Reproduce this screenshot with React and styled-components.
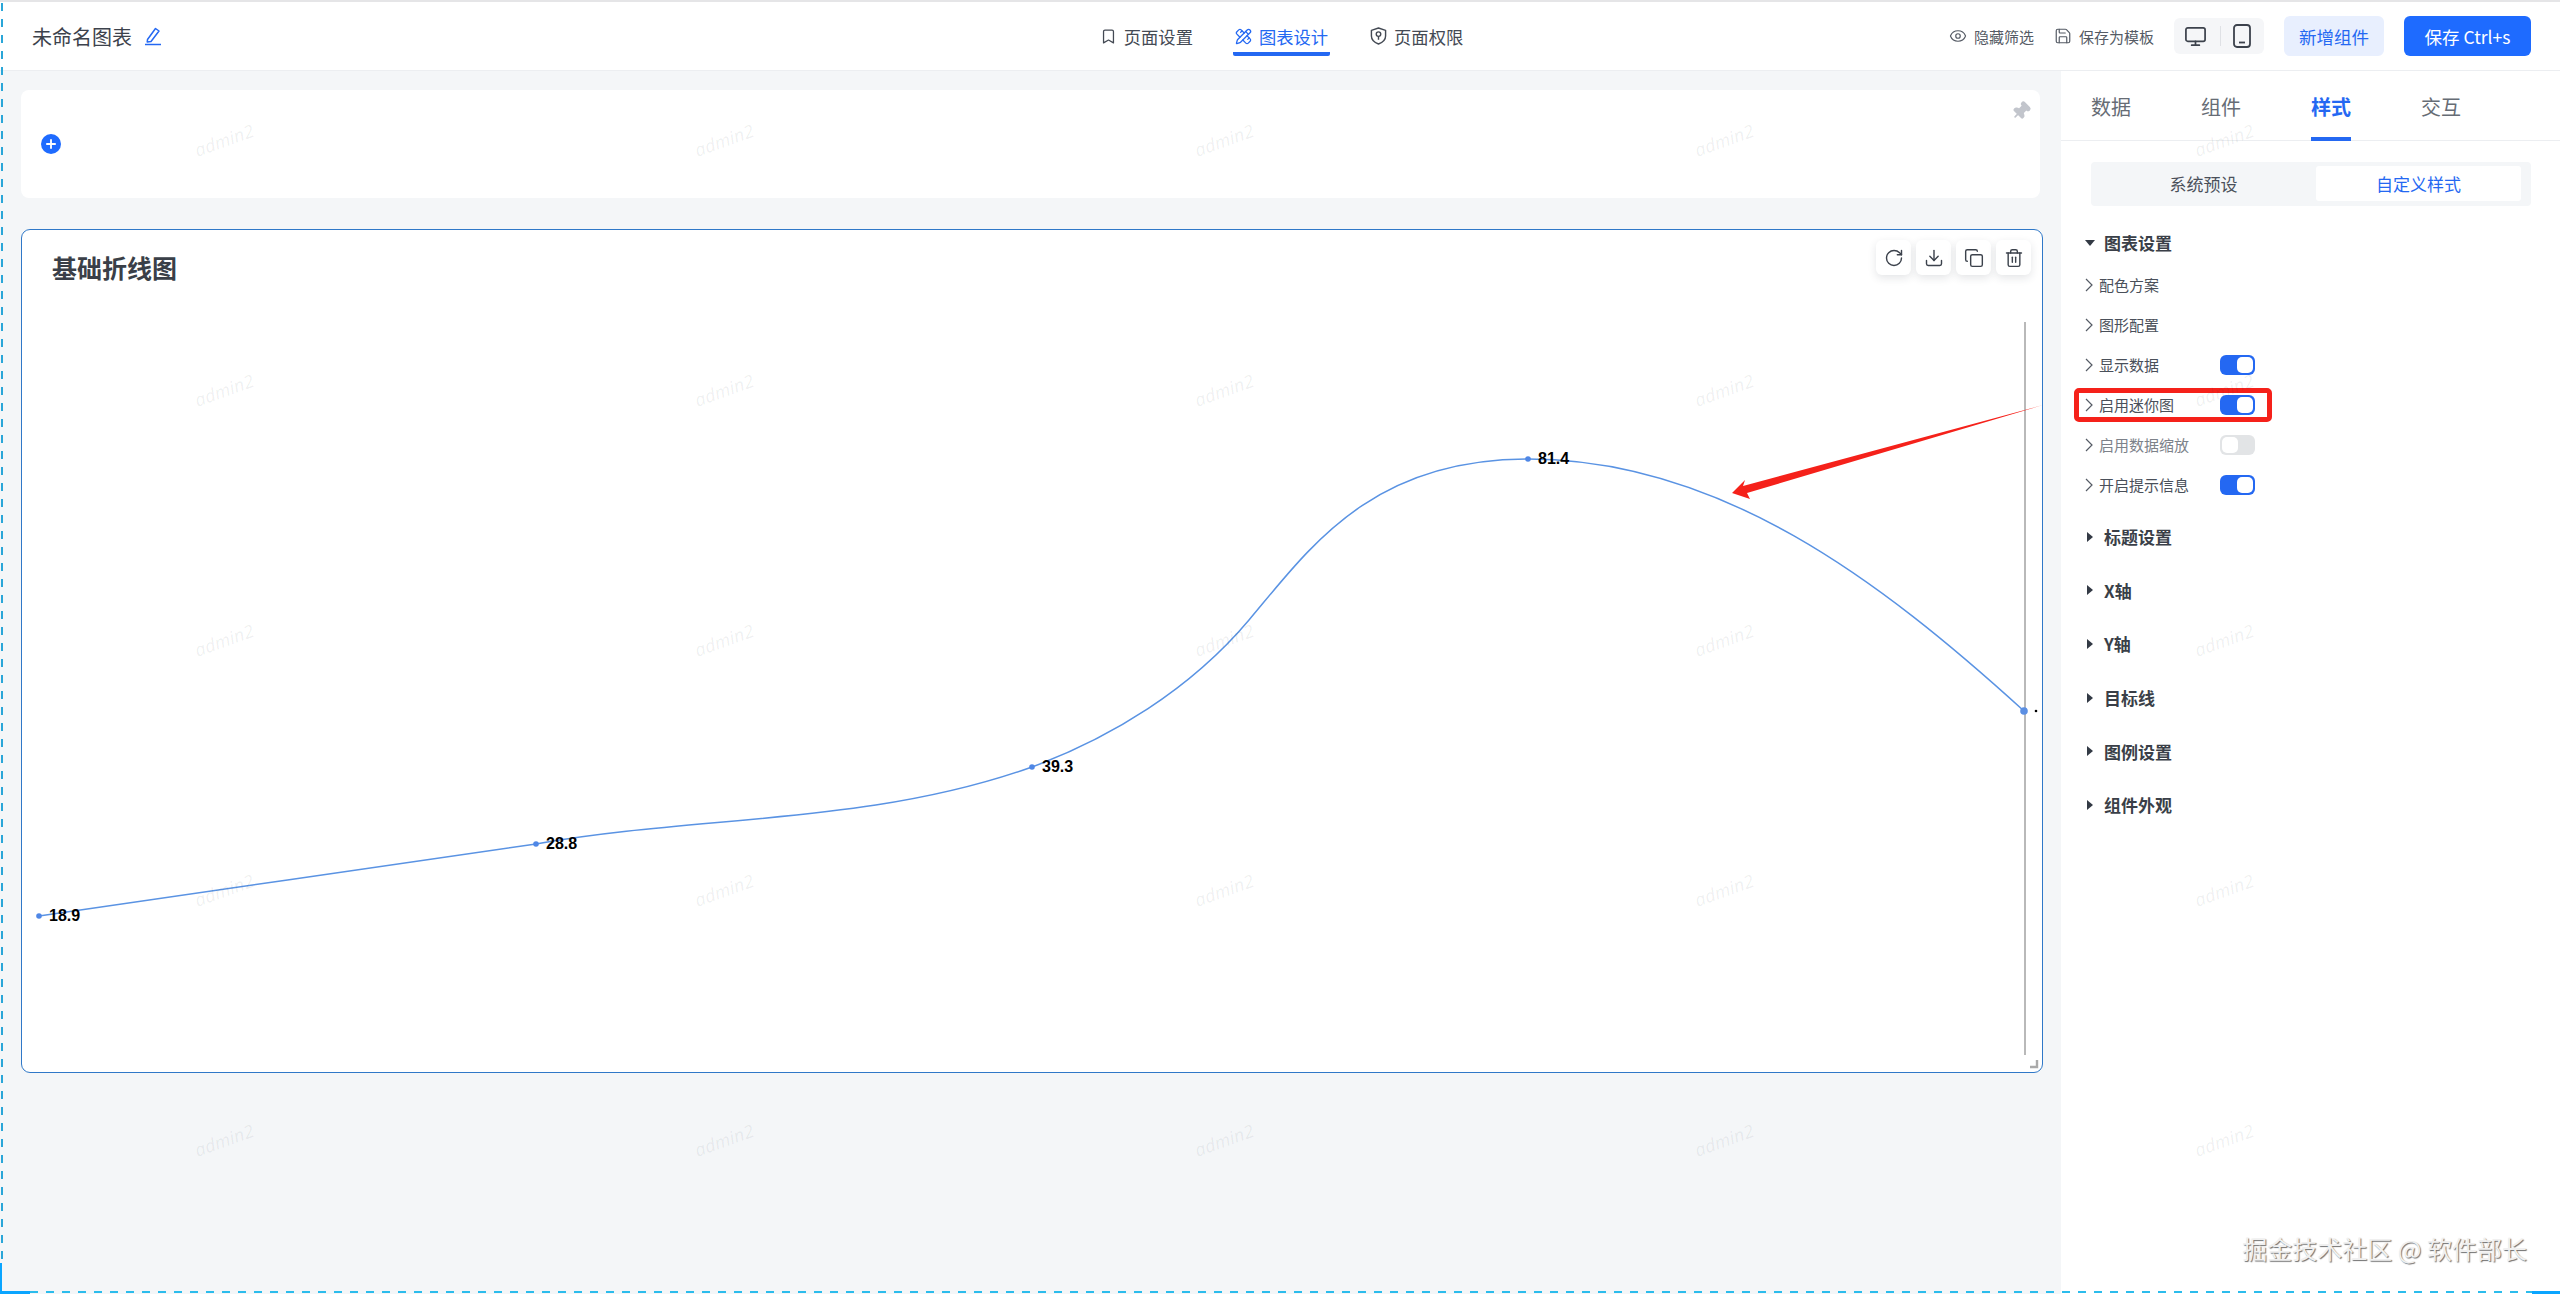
import React from "react";
import styled, { createGlobalStyle } from "styled-components";
import {
  Bookmark,
  PencilRuler,
  Eye,
  Save,
  Monitor,
  RotateCw,
  Download,
  Copy,
  Trash2,
  Plus,
  Pin,
} from "lucide-react";

const GlobalStyle = createGlobalStyle`
  html, body {
    margin: 0;
    padding: 0;
    background: #fff;
  }
  body {
    font-family: "Noto Sans CJK SC", "Noto Sans", sans-serif;
    color: #333a45;
  }
  *, *::before, *::after {
    box-sizing: border-box;
  }
`;

const Page = styled.div`
  position: relative;
  width: 2560px;
  height: 1294px;
  overflow: hidden;
  display: flex;
  flex-direction: column;
`;

const Header = styled.header`
  height: 71px;
  flex-shrink: 0;
  display: grid;
  grid-template-columns: 1fr auto 1fr;
  align-items: center;
  border-top: 2px solid #e5e5e7;
  border-bottom: 1px solid #eceef1;
  background: #fff;
`;

const TitleGroup = styled.div`
  display: flex;
  align-items: center;
  gap: 12px;
  padding-left: 32px;
  font-size: 20px;
  color: #3c424c;
`;

const NavTabs = styled.nav`
  display: flex;
  gap: 38px;
  margin-left: 3px;
`;

const NavTab = styled.div`
  display: flex;
  align-items: center;
  gap: 7px;
  height: 36px;
  margin-top: 4px;
  padding: 0 2px;
  font-size: 17.3px;
  color: ${(p) => (p.$active ? "#2468f2" : "#444a54")};
  border-bottom: 4px solid ${(p) => (p.$active ? "#2468f2" : "transparent")};
  border-radius: 2px;
`;

const Actions = styled.div`
  display: flex;
  align-items: center;
  justify-content: flex-end;
  gap: 20px;
  padding-right: 29px;
`;

const TextAction = styled.div`
  display: flex;
  align-items: center;
  gap: 7px;
  font-size: 15px;
  color: #555b65;
`;

const DeviceGroup = styled.div`
  display: flex;
  align-items: center;
  width: 90px;
  height: 36px;
  padding: 0 13px 0 10px;
  justify-content: space-between;
  background: #f5f6f8;
  border-radius: 6px;
  color: #3c424c;
`;

const DeviceDivider = styled.span`
  width: 1px;
  height: 20px;
  background: #dfe1e5;
`;

const Button = styled.button`
  height: 40px;
  width: ${(p) => p.$width}px;
  border: 0;
  border-radius: 6px;
  font-family: inherit;
  font-size: 17.5px;
  color: ${(p) => (p.$primary ? "#fff" : "#2468f2")};
  background: ${(p) => (p.$primary ? "#1e6bff" : "#e8effe")};
`;

const Body = styled.div`
  flex: 1;
  display: flex;
  min-height: 0;
`;

const Canvas = styled.main`
  width: 2061px;
  padding: 19px 18px 0 21px;
  background: #f4f6f8;
`;

const FilterCard = styled.section`
  position: relative;
  height: 108px;
  margin-right: 3px;
  margin-bottom: 31px;
  padding-left: 20px;
  display: flex;
  align-items: center;
  background: #fff;
  border-radius: 8px;
`;

const AddCircle = styled.div`
  width: 20px;
  height: 20px;
  border-radius: 50%;
  background: #1e6bff;
  color: #fff;
  display: flex;
  align-items: center;
  justify-content: center;
`;

const PinMark = styled.div`
  position: absolute;
  top: 11px;
  right: 9px;
  color: #c2c5cc;
  transform: rotate(45deg);
  display: flex;
`;

const ChartCard = styled.section`
  position: relative;
  height: 844px;
  display: flex;
  flex-direction: column;
  background: #fff;
  border: 1px solid #2f78c8;
  border-radius: 9px;
`;

const ChartTitle = styled.h2`
  margin: 0;
  height: 70px;
  flex-shrink: 0;
  padding: 19px 0 0 30px;
  font-size: 25px;
  line-height: 36px;
  font-weight: 700;
  color: #3a3f48;
`;

const ChartToolbar = styled.div`
  position: absolute;
  top: 10px;
  right: 11px;
  display: flex;
  gap: 5px;
`;

const ToolButton = styled.div`
  width: 35px;
  height: 35px;
  display: flex;
  align-items: center;
  justify-content: center;
  background: #fff;
  border-radius: 6px;
  box-shadow: 0 3px 8px rgba(30, 40, 60, 0.12);
  color: #3c424c;
`;

const ChartSvg = styled.svg`
  display: block;
  flex: 1;
  width: 100%;
  min-height: 0;
`;

const PointLabel = styled.text`
  font-family: "Liberation Sans", Arial, sans-serif;
  font-size: 16px;
  font-weight: 700;
  fill: #000;
`;

const Panel = styled.aside`
  width: 499px;
  background: #fff;
`;

const PanelTabs = styled.div`
  display: flex;
  gap: 70px;
  height: 70px;
  padding-left: 30px;
  border-bottom: 1px solid #eceef1;
`;

const PanelTab = styled.div`
  display: flex;
  align-items: center;
  height: 70px;
  padding-top: 4px;
  font-size: 20px;
  font-weight: ${(p) => (p.$active ? 700 : 400)};
  color: ${(p) => (p.$active ? "#2468f2" : "#666c75")};
  border-bottom: 4px solid ${(p) => (p.$active ? "#2468f2" : "transparent")};
`;

const Segment = styled.div`
  display: grid;
  grid-template-columns: 225px 205px;
  height: 44px;
  margin: 21px 29px 0 30px;
  padding: 4px 10px 5px 0;
  background: #f4f6f8;
  border-radius: 4px;
`;

const SegmentItem = styled.div`
  display: flex;
  align-items: center;
  justify-content: center;
  font-size: 17px;
  border-radius: 3px;
  color: ${(p) => (p.$active ? "#2468f2" : "#4a505a")};
  background: ${(p) => (p.$active ? "#fff" : "transparent")};
`;

const SettingList = styled.div`
  margin-top: 10px;
  padding-left: 24px;
`;

const SectionHeader = styled.div`
  display: flex;
  align-items: center;
  gap: 10px;
  height: 53.7px;
  font-size: 17px;
  font-weight: 700;
  color: #3a3f48;
`;

const Caret = styled.span`
  width: 9px;
  height: 10px;
  display: flex;
  align-items: center;
  justify-content: center;
  &::before {
    content: "";
    border-style: solid;
    border-color: transparent;
    ${(p) =>
      p.$open
        ? "border-width: 6px 5px 0 5px; border-top-color: #333a45;"
        : "border-width: 5px 0 5px 6px; border-left-color: #333a45;"}
  }
`;

const Rows = styled.div`
  margin: -5px 0 5px;
`;

const Row = styled.div`
  position: relative;
  display: flex;
  align-items: center;
  height: 40px;
  font-size: 15px;
  color: ${(p) => (p.$disabled ? "#7d828a" : "#4a505a")};
  ${(p) =>
    p.$highlight &&
    `
    &::after {
      content: "";
      position: absolute;
      left: -11px;
      top: 3px;
      width: 198px;
      height: 34px;
      border: 5px solid #f5211a;
      border-radius: 5px;
    }
  `}
`;

const RowChevron = styled.svg`
  width: 8px;
  height: 14px;
  margin-right: 6px;
  flex-shrink: 0;
`;

const RowLabel = styled.span`
  width: 121px;
`;

const Switch = styled.span`
  display: flex;
  justify-content: ${(p) => (p.$on ? "flex-end" : "flex-start")};
  width: 35px;
  height: 20px;
  padding: 2px;
  border-radius: 6px;
  background: ${(p) => (p.$on ? "#2468f2" : "#e2e4e6")};
  &::before {
    content: "";
    width: 16px;
    height: 16px;
    border-radius: 5px;
    background: #fff;
  }
`;

const WatermarkLayer = styled.div`
  position: absolute;
  inset: 0;
  overflow: hidden;
  pointer-events: none;
  display: grid;
  grid-template-columns: repeat(5, 500px);
  grid-auto-rows: 250px;
  margin: 15px 0 0 -26px;
`;

const Watermark = styled.span`
  display: flex;
  align-items: center;
  justify-content: center;
  font-family: "Noto Sans", sans-serif;
  font-size: 18px;
  font-style: italic;
  color: rgba(30, 40, 60, 0.07);
  transform: rotate(-20deg);
`;

const ArrowMark = styled.svg`
  position: absolute;
  left: 1720px;
  top: 400px;
  pointer-events: none;
`;

const SourceMark = styled.div`
  position: absolute;
  right: 33px;
  top: 1232px;
  font-size: 25px;
  line-height: 32px;
  color: #f0f0f0;
  text-shadow: 1px 1px 1px #707070;
`;

const DashedEdge = styled.div`
  position: absolute;
  ${(p) =>
    p.$side === "left"
      ? `left: 1px; top: 3px; width: 2px; height: 1260px;
         background: repeating-linear-gradient(180deg, #2aa6d8 0 8px, transparent 8px 16px);`
      : `left: 30px; bottom: 1px; width: 2502px; height: 2px;
         background: repeating-linear-gradient(90deg, #2cbcec 0 8px, transparent 8px 16px);`}
`;

const CornerMark = styled.div`
  position: absolute;
  bottom: 0;
  background: #0aa5ff;
  ${(p) =>
    p.$side === "left"
      ? `left: 0; width: 30px; height: 3px;
         &::before {
           content: "";
           position: absolute;
           left: 0;
           bottom: 0;
           width: 2px;
           height: 31px;
           background: #0aa5ff;
         }`
      : `right: 0; width: 28px; height: 3px;`}
`;

const EditIcon = () => (
  <svg width="18" height="20" viewBox="0 0 18 20" fill="none" stroke="#2468f2" strokeWidth="1.5">
    <path d="M3.5 13.5 L11.5 2.5 L15 5 L7 15.5 L3.2 16 Z" strokeLinejoin="round" />
    <path d="M1 18.5 H17" />
  </svg>
);

const ShieldKeyIcon = () => (
  <svg width="17" height="20" viewBox="0 0 18 20" fill="none" stroke="#444a54" strokeWidth="1.5">
    <path d="M9 1.5 L16.5 4 V10 C16.5 14 13 17 9 18.5 C5 17 1.5 14 1.5 10 V4 Z" strokeLinejoin="round" />
    <circle cx="9" cy="8" r="2.4" />
    <path d="M9 10.4 V14" />
  </svg>
);

const PhoneIcon = () => (
  <svg width="18" height="24" viewBox="0 0 18 24" fill="none" stroke="#3c424c" strokeWidth="1.8">
    <rect x="1" y="1" width="16" height="22" rx="3" />
    <path d="M6 18.5 H12" />
  </svg>
);

const sections = ["标题设置", "X轴", "Y轴", "目标线", "图例设置", "组件外观"];

const rows = [
  { label: "配色方案" },
  { label: "图形配置" },
  { label: "显示数据", on: true },
  { label: "启用迷你图", on: true, highlight: true },
  { label: "启用数据缩放", on: false, disabled: true },
  { label: "开启提示信息", on: true },
];

const points = [
  { x: 39, y: 916, value: "18.9" },
  { x: 536, y: 844, value: "28.8" },
  { x: 1032, y: 767, value: "39.3" },
  { x: 1528, y: 459, value: "81.4" },
];

const curve =
  "M39 916 C205 892 370 868 536 844 C700 815 870 825 1032 767 C1110 738 1190 690 1249 620 C1309 549 1370 459 1528 459 C1720 459 1880 580 2024 711";

const App = () => {
  return (
    <Page>
      <GlobalStyle />
      <Header>
        <TitleGroup>
          未命名图表
          <EditIcon />
        </TitleGroup>
        <NavTabs>
          <NavTab>
            <Bookmark size={17} strokeWidth={1.8} />
            页面设置
          </NavTab>
          <NavTab $active>
            <PencilRuler size={17} strokeWidth={1.8} />
            图表设计
          </NavTab>
          <NavTab>
            <ShieldKeyIcon />
            页面权限
          </NavTab>
        </NavTabs>
        <Actions>
          <TextAction>
            <Eye size={18} strokeWidth={1.6} />
            隐藏筛选
          </TextAction>
          <TextAction>
            <Save size={18} strokeWidth={1.6} />
            保存为模板
          </TextAction>
          <DeviceGroup>
            <Monitor size={23} strokeWidth={1.8} />
            <DeviceDivider />
            <PhoneIcon />
          </DeviceGroup>
          <Button $width={100}>新增组件</Button>
          <Button $width={127} $primary>
            保存 Ctrl+s
          </Button>
        </Actions>
      </Header>
      <Body>
        <Canvas>
          <FilterCard>
            <AddCircle>
              <Plus size={14} strokeWidth={3.2} />
            </AddCircle>
            <PinMark>
              <Pin size={20} fill="currentColor" />
            </PinMark>
          </FilterCard>
          <ChartCard>
            <ChartTitle>基础折线图</ChartTitle>
            <ChartToolbar>
              <ToolButton>
                <RotateCw size={20} strokeWidth={1.7} />
              </ToolButton>
              <ToolButton>
                <Download size={20} strokeWidth={1.7} />
              </ToolButton>
              <ToolButton>
                <Copy size={20} strokeWidth={1.7} />
              </ToolButton>
              <ToolButton>
                <Trash2 size={20} strokeWidth={1.7} />
              </ToolButton>
            </ChartToolbar>
            <ChartSvg viewBox="22 300 2020 772">
              <line x1="2025" y1="322" x2="2025" y2="1055" stroke="#b9b9b9" strokeWidth="2" />
              <path d={curve} fill="none" stroke="#5a93e3" strokeWidth="1.5" />
              {points.map((p) => (
                <g key={p.value}>
                  <circle cx={p.x} cy={p.y} r="2.8" fill="#4f87e6" />
                  <PointLabel x={p.x + 10} y={p.y + 5}>
                    {p.value}
                  </PointLabel>
                </g>
              ))}
              <circle cx="2024" cy="711" r="3.8" fill="#5b8fe3" />
              <circle cx="2036" cy="711" r="1.3" fill="#000" />
              <path d="M2037 1060 V1067 H2030" fill="none" stroke="#aaa" strokeWidth="2.4" />
            </ChartSvg>
          </ChartCard>
        </Canvas>
        <Panel>
          <PanelTabs>
            <PanelTab>数据</PanelTab>
            <PanelTab>组件</PanelTab>
            <PanelTab $active>样式</PanelTab>
            <PanelTab>交互</PanelTab>
          </PanelTabs>
          <Segment>
            <SegmentItem>系统预设</SegmentItem>
            <SegmentItem $active>自定义样式</SegmentItem>
          </Segment>
          <SettingList>
            <SectionHeader>
              <Caret $open />
              图表设置
            </SectionHeader>
            <Rows>
              {rows.map((r) => (
                <Row key={r.label} $disabled={r.disabled} $highlight={r.highlight}>
                  <RowChevron viewBox="0 0 8 14" fill="none" stroke="#555b65" strokeWidth="1.2">
                    <path d="M1 1 L7 7 L1 13" />
                  </RowChevron>
                  <RowLabel>{r.label}</RowLabel>
                  {r.on !== undefined && <Switch $on={r.on} />}
                </Row>
              ))}
            </Rows>
            {sections.map((s) => (
              <SectionHeader key={s}>
                <Caret />
                {s}
              </SectionHeader>
            ))}
          </SettingList>
        </Panel>
      </Body>
      <WatermarkLayer>
        {Array.from({ length: 25 }, (_, i) => (
          <Watermark key={i}>admin2</Watermark>
        ))}
      </WatermarkLayer>
      <ArrowMark width="330" height="105" viewBox="1720 400 330 105">
        <polygon
          points="1732,493 1745,480 1743,486 2043,405 1747,493 1750,499"
          fill="#f5211a"
        />
      </ArrowMark>
      <SourceMark>掘金技术社区 @ 软件部长</SourceMark>
      <DashedEdge $side="left" />
      <DashedEdge $side="bottom" />
      <CornerMark $side="left" />
      <CornerMark $side="right" />
    </Page>
  );
};

export default App;
